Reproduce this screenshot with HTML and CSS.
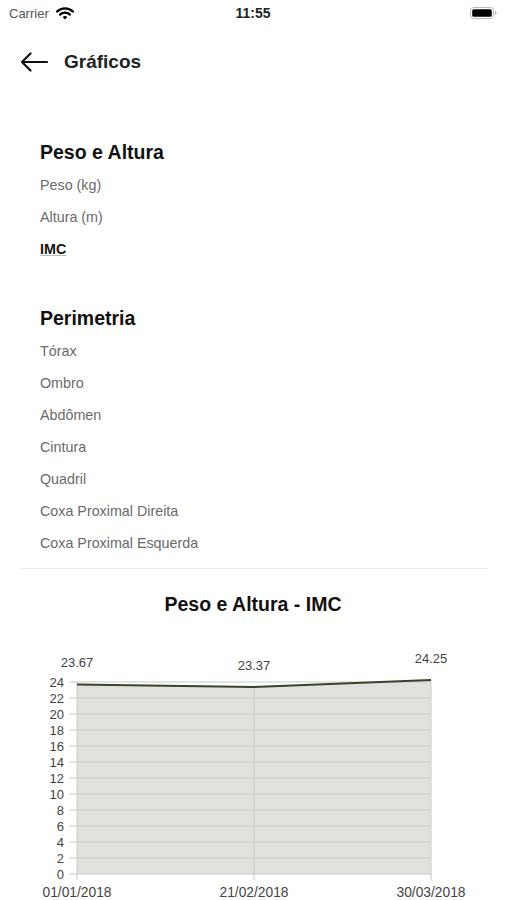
FILE: index.html
```html
<!DOCTYPE html>
<html lang="pt-BR">
<head>
  <meta charset="UTF-8" />
  <meta name="viewport" content="width=device-width, initial-scale=1.0"/>
  <title>Gráficos</title>
  <link rel="stylesheet" href="styles.css">
</head>
<body>

  <!-- Barra de status -->
  <div class="status-bar">
    <div class="status-left">
      <span class="carrier">Carrier</span>
      <svg class="wifi" width="18" height="13" viewBox="0 0 18 13">
        <path d="M1 4.6 A11.5 11.5 0 0 1 17 4.6" fill="none" stroke="#000" stroke-width="2.2" stroke-linecap="round"/>
        <path d="M4 7.6 A7.2 7.2 0 0 1 14 7.6" fill="none" stroke="#000" stroke-width="2.2" stroke-linecap="round"/>
        <path d="M9 12.5 L6.6 10.1 A3.4 3.4 0 0 1 11.4 10.1 Z" fill="#000"/>
      </svg>
    </div>
    <span class="clock">11:55</span>
    <div class="status-right">
      <svg class="battery" width="27" height="12" viewBox="0 0 27 12">
        <rect x="0.5" y="0.5" width="23" height="11" rx="3" fill="none" stroke="#bbb" stroke-width="1"/>
        <rect x="2.2" y="2.2" width="19.6" height="7.6" rx="1.5" fill="#000"/>
        <path d="M25 4 a1.6 2 0 0 1 0 4 Z" fill="#bbb"/>
      </svg>
    </div>
  </div>

  <!-- Cabeçalho -->
  <div class="nav">
    <svg class="back" width="28" height="20" viewBox="0 0 28 20">
      <path d="M27 10 H2 M10.5 1.5 L2 10 L10.5 18.5" fill="none" stroke="#111" stroke-width="2.2" stroke-linecap="round" stroke-linejoin="round"/>
    </svg>
    <span class="nav-title">Gráficos</span>
  </div>

  <div class="content">
    <div class="section">
      <h2>Peso e Altura</h2>
      <ul class="options">
        <li>Peso (kg)</li>
        <li>Altura (m)</li>
        <li class="active">IMC</li>
      </ul>
    </div>

    <div class="section">
      <h2>Perimetria</h2>
      <ul class="options">
        <li>Tórax</li>
        <li>Ombro</li>
        <li>Abdômen</li>
        <li>Cintura</li>
        <li>Quadril</li>
        <li>Coxa Proximal Direita</li>
        <li>Coxa Proximal Esquerda</li>
      </ul>
    </div>
  </div>

  <hr class="divider">

  <h3 class="chart-title">Peso e Altura - IMC</h3>

  <svg class="chart" width="506" height="280" viewBox="0 0 506 280">
    <!-- área -->
    <polygon points="77,63.6 254,66 431,59 431,253 77,253" fill="#e1e2dd"/>
    <!-- grade horizontal -->
    <g stroke="#c9cac5" stroke-width="1">
      <line x1="70" y1="61" x2="431" y2="61"/>
      <line x1="70" y1="77" x2="431" y2="77"/>
      <line x1="70" y1="93" x2="431" y2="93"/>
      <line x1="70" y1="109" x2="431" y2="109"/>
      <line x1="70" y1="125" x2="431" y2="125"/>
      <line x1="70" y1="141" x2="431" y2="141"/>
      <line x1="70" y1="157" x2="431" y2="157"/>
      <line x1="70" y1="173" x2="431" y2="173"/>
      <line x1="70" y1="189" x2="431" y2="189"/>
      <line x1="70" y1="205" x2="431" y2="205"/>
      <line x1="70" y1="221" x2="431" y2="221"/>
      <line x1="70" y1="237" x2="431" y2="237"/>
      <line x1="70" y1="253" x2="431" y2="253"/>
    </g>
    <!-- grade vertical -->
    <g stroke="#cbccc8" stroke-width="1">
      <line x1="77" y1="61" x2="77" y2="259"/>
      <line x1="254" y1="66" x2="254" y2="259"/>
      <line x1="431" y1="59" x2="431" y2="259"/>
    </g>
    <!-- linha -->
    <polyline points="77,63.6 254,66 431,59" fill="none" stroke="#37432a" stroke-width="2"/>
    <!-- eixo y -->
    <g class="axis-y" text-anchor="end">
      <text x="64" y="65.5">24</text>
      <text x="64" y="81.5">22</text>
      <text x="64" y="97.5">20</text>
      <text x="64" y="113.5">18</text>
      <text x="64" y="129.5">16</text>
      <text x="64" y="145.5">14</text>
      <text x="64" y="161.5">12</text>
      <text x="64" y="177.5">10</text>
      <text x="64" y="193.5">8</text>
      <text x="64" y="209.5">6</text>
      <text x="64" y="225.5">4</text>
      <text x="64" y="241.5">2</text>
      <text x="64" y="257.5">0</text>
    </g>
    <!-- eixo x -->
    <g class="axis-x" text-anchor="middle">
      <text x="77" y="276">01/01/2018</text>
      <text x="254" y="276">21/02/2018</text>
      <text x="431" y="276">30/03/2018</text>
    </g>
    <!-- valores -->
    <g class="values" text-anchor="middle">
      <text x="77" y="46">23.67</text>
      <text x="254" y="49">23.37</text>
      <text x="431" y="42">24.25</text>
    </g>
  </svg>

</body>
</html>
```

FILE: styles.css
```css
* {
  box-sizing: border-box;
}

body {
  margin: 0;
  padding: 0;
  font-family: 'Liberation Sans', Arial, sans-serif;
  background: #fff;
  color: #111;
  width: 506px;
  overflow: hidden;
}

.status-bar {
  height: 26px;
  display: flex;
  align-items: center;
  justify-content: space-between;
  padding: 0 9px;
}

.status-left {
  display: flex;
  align-items: center;
  gap: 7px;
  width: 100px;
}

.carrier {
  font-size: 13px;
  color: #555;
}

.clock {
  font-size: 14px;
  font-weight: bold;
  color: #222;
}

.status-right {
  width: 100px;
  display: flex;
  justify-content: flex-end;
}

.nav {
  height: 72px;
  display: flex;
  align-items: center;
  gap: 16px;
  padding-left: 20px;
}

.nav-title {
  font-size: 19px;
  font-weight: bold;
  color: #222;
}

.content {
  padding: 38px 40px 0;
}

.section + .section {
  margin-top: 37px;
}

h2 {
  margin: 0 0 1px;
  font-size: 19.5px;
  line-height: 32px;
  font-weight: bold;
  color: #111;
}

.options {
  list-style: none;
  margin: 0;
  padding: 0;
}

.options li {
  font-size: 14.3px;
  line-height: 32px;
  height: 32px;
  color: #6a6a6a;
}

.options li.active {
  color: #111;
  font-weight: bold;
  text-decoration: underline;
  text-decoration-color: #bbb;
}

.divider {
  border: none;
  border-top: 1px solid #ececec;
  margin: 9px 18px 0 20px;
}

.chart-title {
  margin: 23px 0 0;
  text-align: center;
  font-size: 19.5px;
  line-height: 24px;
  font-weight: bold;
  color: #111;
}

.chart {
  display: block;
  margin-top: 5px;
}

.chart text {
  font-family: 'Liberation Sans', Arial, sans-serif;
  font-size: 13px;
  fill: #444;
}

.chart .axis-x text {
  font-size: 13.8px;
}
```
